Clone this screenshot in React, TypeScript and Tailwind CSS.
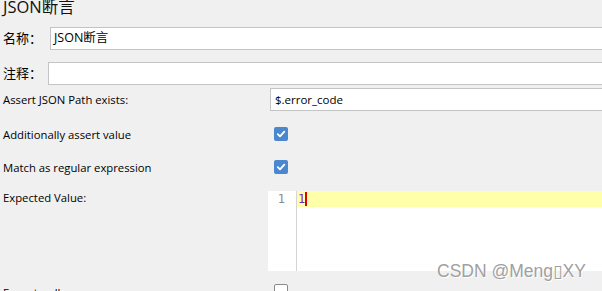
import React from "react";

const ui = { fontFamily: '"Open Sans", "Noto Sans CJK SC", sans-serif' };
const cjk = { fontFamily: '"Open Sans", "Noto Sans CJK SC", sans-serif' };

function Checkbox({ checked }: { checked: boolean }) {
    if (!checked) {
        return <div className="h-[14px] w-[14px] rounded-[2px] border border-[#8a8a8a] bg-white" />;
    }
    return (
        <div className="flex h-[14px] w-[14px] items-center justify-center rounded-[2px] bg-[#4a87cf]">
            <svg width="10" height="10" viewBox="0 0 10 10">
                <path d="M1.8 5.2 L4 7.4 L8.3 2.6" fill="none" stroke="white" strokeWidth="1.8" strokeLinecap="round" strokeLinejoin="round" />
            </svg>
        </div>
    );
}

export default function App() {
    return (
        <div className="relative h-[291px] w-[602px] overflow-hidden bg-[#f0f0f0] text-[11.3px] text-black" style={ui}>
            <div className="w-[640px]">
                {/* title */}
                <div className="-mt-[3px] h-[19px] pl-[3px] text-[16.5px] leading-[19px] text-[#111]" style={cjk}>
                    JSON断言
                </div>

                {/* name */}
                <div className="mt-[11px] flex h-[23px] items-center">
                    <div className="w-[50px] pl-[3px] text-[13px]" style={cjk}>名称：</div>
                    <div className="flex h-full flex-1 items-center border border-[#c4c4c4] bg-white pl-[3px] text-[12.5px]" style={cjk}>
                        JSON断言
                    </div>
                </div>

                {/* comment */}
                <div className="mt-[12px] flex h-[23px] items-center">
                    <div className="w-[48px] pl-[3px] text-[13px]" style={cjk}>注释：</div>
                    <div className="h-full flex-1 border border-[#c4c4c4] bg-white" />
                </div>

                {/* json path */}
                <div className="mt-[3px] flex h-[23px] items-center">
                    <div className="w-[270px] pl-[3px] pt-[2px]">Assert JSON Path exists:</div>
                    <div className="flex h-full flex-1 items-center border border-[#c4c4c4] bg-white pl-[4px] text-[11.5px]">$.error_code</div>
                </div>

                {/* additionally assert value */}
                <div className="mt-[16px] flex h-[14px] items-center">
                    <div className="w-[274px] pl-[3px] pt-[3px]">Additionally assert value</div>
                    <Checkbox checked />
                </div>

                {/* regex */}
                <div className="mt-[19px] flex h-[14px] items-center">
                    <div className="w-[274px] pl-[3px] pt-[3px]">Match as regular expression</div>
                    <Checkbox checked />
                </div>

                {/* expected value */}
                <div className="mt-[17px] flex h-[80px]">
                    <div className="w-[268px] pl-[3px] leading-[14px]">Expected Value:</div>
                    <div className="flex flex-1 bg-white">
                        <div className="w-[29px] border-r border-[#d4d4d4] pr-[11px] text-right text-[12px] leading-[16px] text-[#8a8a8a]" style={{ fontFamily: '"DejaVu Sans Mono", monospace' }}>
                            1
                        </div>
                        <div className="flex-1">
                            <div className="flex h-[16px] items-center bg-[#ffffaa] pl-[1px] text-[12px] text-[#7a1fd0]" style={{ fontFamily: '"DejaVu Sans Mono", monospace' }}>
                                <span>1</span>
                                <span className="h-[14px] w-[2px] bg-[#e00000]" />
                            </div>
                        </div>
                    </div>
                </div>

                {/* expect null */}
                <div className="mt-[13px] flex h-[14px] items-start">
                    <div className="w-[274px] pl-[3px] pt-[1px]">Expect null</div>
                    <Checkbox checked={false} />
                </div>
            </div>

            {/* watermark */}
            <div
                className="absolute left-[437px] top-[258px] text-[17.5px] text-[#a0a0a0]"
                style={{ fontFamily: '"Liberation Sans", "DejaVu Sans", sans-serif', textShadow: "0 0 1px #fff, 1px 1px 0 #fff" }}
            >
                CSDN @Meng▯XY
            </div>
        </div>
    );
}
